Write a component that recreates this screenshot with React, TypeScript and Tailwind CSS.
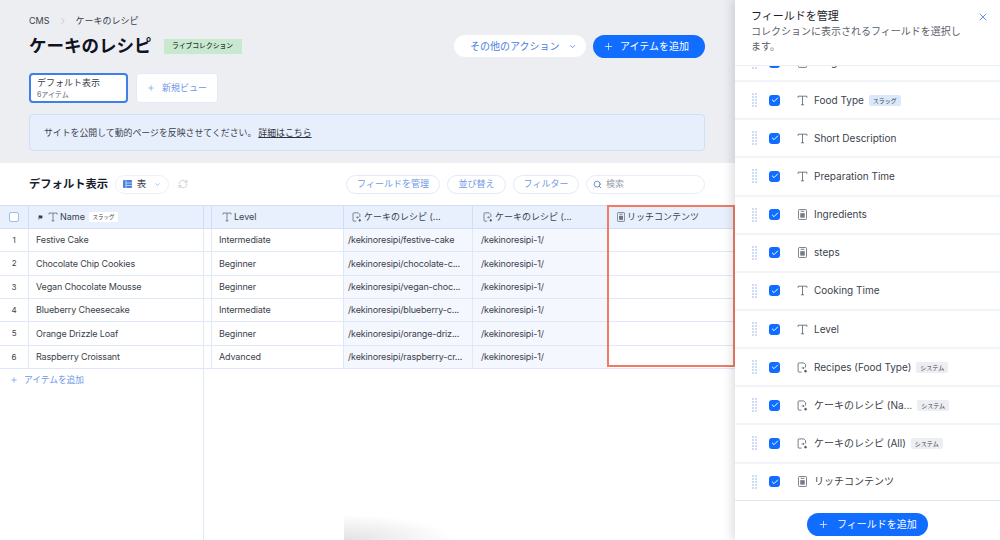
import { Check, ChevronDown, ChevronRight, Flag, Plus, RefreshCw, Search, X } from 'lucide-react';

const TextIcon = ({ className = '' }: { className?: string }) => (
  <svg viewBox="0 0 12 12" fill="none" stroke="currentColor" strokeWidth="0.8" className={className}>
    <path d="M1.2 3V1.3h9.6V3M6 1.3v9.4M4.3 10.7h3.4" />
  </svg>
);

const RichIcon = ({ className = '' }: { className?: string }) => (
  <svg viewBox="0 0 10 12" fill="none" className={className}>
    <rect x="0.5" y="0.5" width="9" height="11" rx="1" stroke="currentColor" strokeWidth="0.8" />
    <rect x="2.5" y="4.5" width="5" height="5" fill="currentColor" opacity="0.75" />
    <path d="M3 2.5h4" stroke="currentColor" strokeWidth="0.8" />
  </svg>
);

const RefIcon = ({ className = '' }: { className?: string }) => (
  <svg viewBox="0 0 12 12" fill="none" stroke="currentColor" strokeWidth="0.8" className={className}>
    <path d="M5 11H2.2a1 1 0 0 1-1-1V2a1 1 0 0 1 1-1h5.2l2 2v3" />
    <path d="M5 6.5h2.6M6.6 5.3l1.2 1.2-1.2 1.2" />
    <circle cx="9.3" cy="10" r="1" fill="currentColor" />
  </svg>
);

const TableIcon = () => (
  <svg viewBox="0 0 9 8" className="h-[8px] w-[9px]">
    <rect width="9" height="8" rx="1" fill="#4a80e0" />
    <path d="M3 0v8M3 3h6M3 5.5h6" stroke="#ffffff" strokeWidth="0.6" />
  </svg>
);

const columns = ['/kekinoresipi/festive-cake', '/kekinoresipi/chocolate-c...', '/kekinoresipi/vegan-choc...', '/kekinoresipi/blueberry-c...', '/kekinoresipi/orange-driz...', '/kekinoresipi/raspberry-cr...'];

const rows = [
  ['Festive Cake', 'Intermediate'],
  ['Chocolate Chip Cookies', 'Beginner'],
  ['Vegan Chocolate Mousse', 'Beginner'],
  ['Blueberry Cheesecake', 'Intermediate'],
  ['Orange Drizzle Loaf', 'Beginner'],
  ['Raspberry Croissant', 'Advanced'],
];

type Field = { name: string; icon: 'text' | 'rich' | 'ref'; tag?: string };

const fields: Field[] = [
  { name: 'Image', icon: 'rich' },
  { name: 'Food Type', icon: 'text', tag: 'スラッグ' },
  { name: 'Short Description', icon: 'text' },
  { name: 'Preparation Time', icon: 'text' },
  { name: 'Ingredients', icon: 'rich' },
  { name: 'steps', icon: 'rich' },
  { name: 'Cooking Time', icon: 'text' },
  { name: 'Level', icon: 'text' },
  { name: 'Recipes (Food Type)', icon: 'ref', tag: 'システム' },
  { name: 'ケーキのレシピ (Na...', icon: 'ref', tag: 'システム' },
  { name: 'ケーキのレシピ (All)', icon: 'ref', tag: 'システム' },
  { name: 'リッチコンテンツ', icon: 'rich' },
];

const FieldRow = ({ field }: { field: Field }) => (
  <div className="flex h-[38.15px] shrink-0 items-center border-b-2 border-[#f3f4f7] pl-[17px]">
    <div className="grid w-[5px] grid-cols-2 gap-[1px]">
      {[...Array(10)].map((_, i) => (
        <span key={i} className="h-[2px] w-[2px] bg-[#cfdcf5]" />
      ))}
    </div>
    <div className="ml-[12px] flex h-[11px] w-[11px] items-center justify-center rounded-[3px] bg-[#116dff] text-white">
      <Check size={8} strokeWidth={3} />
    </div>
    <div className="ml-[17px] flex w-[11px] items-center justify-center text-[#4a4e5c]">
      {field.icon === 'text' && <TextIcon className="h-[11px] w-[11px]" />}
      {field.icon === 'rich' && <RichIcon className="h-[11px] w-[9px]" />}
      {field.icon === 'ref' && <RefIcon className="h-[11px] w-[11px]" />}
    </div>
    <span className="ml-[6px] text-[10px] text-[#3b3f4c]">{field.name}</span>
    {field.tag && (
      <span className={`ml-[5px] flex h-[11px] items-center rounded-[2px] px-[4px] text-[6px] text-[#3b3f4c] ${field.tag === 'スラッグ' ? 'bg-[#dbe7fb]' : 'bg-[#eceef2]'}`}>
        {field.tag}
      </span>
    )}
  </div>
);

const HeaderCell = ({ label, width, icon, pad }: { label: string; width: string; icon: React.ReactNode; pad: string }) => (
  <div className={`flex h-full items-center border-r border-[#cfdff8] text-[9px] text-[#3b3f4c] ${width} ${pad}`}>
    {icon}
    <span className="ml-[2px] whitespace-nowrap">{label}</span>
  </div>
);

export default function App() {
  return (
    <div className="flex h-[540px] w-[1000px] overflow-hidden bg-white font-['Inter','Noto_Sans_CJK_JP',sans-serif]">
      <div className="relative flex w-[735px] shrink-0 flex-col">
        {/* top area */}
        <div className="h-[163px] shrink-0 bg-[#eceef2] pl-[29px] pr-[30px]">
          <div className="flex h-[42px] items-center text-[9px] text-[#3b3f4c]">
            <span>CMS</span>
            <ChevronRight size={10} strokeWidth={1} className="ml-[9px] text-[#8a8f9c]" />
            <span className="ml-[7px]">ケーキのレシピ</span>
          </div>
          <div className="flex h-[8px] items-center justify-between">
            <div className="flex items-center">
              <h1 className="text-[17.5px] font-bold text-[#0e1222]">ケーキのレシピ</h1>
              <span className="ml-[12px] flex h-[15px] w-[78px] items-center justify-center bg-[#c9e8d0] text-[6.8px] font-medium text-[#2c3a33]">ライブコレクション</span>
            </div>
            <div className="flex items-center gap-[7px]">
              <button className="flex h-[22px] w-[132px] items-center gap-[8px] rounded-full bg-white pl-[16px] text-[10px] text-[#4a80e0]">
                その他のアクション
                <ChevronDown size={9} />
              </button>
              <button className="flex h-[23px] w-[112px] items-center gap-[6px] rounded-full bg-[#116dff] pl-[10px] text-[10px] text-white">
                <Plus size={11} strokeWidth={1.5} />
                アイテムを追加
              </button>
            </div>
          </div>
          <div className="mt-[23px] flex gap-[8px]">
            <div className="flex h-[30px] w-[99px] flex-col justify-center rounded-[4px] border-2 border-[#3f7fe8] bg-white pl-[6px]">
              <span className="text-[9px] leading-[13px] text-[#3b3f4c]">デフォルト表示</span>
              <span className="text-[7px] leading-[11px] text-[#5a5f6c]">6アイテム</span>
            </div>
            <button className="flex h-[30px] w-[82px] items-center justify-center gap-[7px] rounded-[4px] border border-[#e3e9f6] bg-white text-[9px] text-[#6d98e6]">
              <Plus size={8} />
              新規ビュー
            </button>
          </div>
          <div className="mt-[11px] flex h-[37px] items-center rounded-[4px] border border-[#cfdff8] bg-[#e7effd] pl-[14px] text-[8.9px] text-[#3b3f4c]">
            サイトを公開して動的ページを反映させてください。
            <span className="ml-[2px] text-[#2f3340] underline">詳細はこちら</span>
          </div>
        </div>

        {/* toolbar */}
        <div className="flex h-[42px] shrink-0 items-center bg-white pl-[29px] pr-[30px]">
          <span className="text-[11.3px] font-bold text-[#1a1e2c]">デフォルト表示</span>
          <button className="ml-[7px] flex h-[19px] w-[54px] items-center justify-center gap-[5px] rounded-full border border-[#eef1f8] text-[9.5px] text-[#3b3f4c]">
            <TableIcon />
            表
            <ChevronDown size={7} className="ml-[3px] text-[#6d98e6]" />
          </button>
          <RefreshCw size={10} strokeWidth={1.5} className="ml-[9px] text-[#b4b8c2]" />
          <div className="ml-auto flex items-center gap-[7px] text-[9px] text-[#6d98e6]">
            <button className="flex h-[19px] w-[94px] items-center justify-center rounded-full border border-[#e3e9f6]">フィールドを管理</button>
            <button className="flex h-[19px] w-[59px] items-center justify-center rounded-full border border-[#e3e9f6]">並び替え</button>
            <button className="flex h-[19px] w-[66px] items-center justify-center rounded-full border border-[#e3e9f6]">フィルター</button>
            <div className="flex h-[19px] w-[119px] items-center gap-[4px] rounded-full border border-[#e9edf5] pl-[6px] text-[#9a9ea8]">
              <Search size={9} className="text-[#4a6fb0]" />
              検索
            </div>
          </div>
        </div>

        {/* table */}
        <div className="relative flex flex-1 flex-col bg-white">
          <div className="flex h-[24px] shrink-0 items-center border-y border-[#cfdff8] bg-[#e8f0fd]">
            <div className="flex h-full w-[29px] items-center justify-center border-r border-[#cfdff8]">
              <span className="h-[10px] w-[10px] rounded-[2px] border border-[#9dbcf0] bg-white" />
            </div>
            <div className="flex h-full w-[175px] items-center border-r border-[#cfdff8] pl-[9px] text-[9px] text-[#3b3f4c]">
              <Flag size={5} fill="currentColor" />
              <TextIcon className="ml-[5px] h-[10px] w-[10px] text-[#4a4e5c]" />
              <span className="ml-[2px]">Name</span>
              <span className="ml-[4px] flex h-[10px] w-[29px] items-center justify-center bg-white text-[5.5px]">スラッグ</span>
            </div>
            <div className="h-full w-[8px] border-r border-[#cfdff8]" />
            <HeaderCell label="Level" width="w-[132px]" pad="pl-[10px]" icon={<TextIcon className="h-[10px] w-[10px] text-[#4a4e5c]" />} />
            <HeaderCell label="ケーキのレシピ (..." width="w-[129px]" pad="pl-[8px]" icon={<RefIcon className="h-[10px] w-[10px] text-[#4a4e5c]" />} />
            <HeaderCell label="ケーキのレシピ (..." width="w-[135px]" pad="pl-[10px]" icon={<RefIcon className="h-[10px] w-[10px] text-[#4a4e5c]" />} />
            <HeaderCell label="リッチコンテンツ" width="w-[127px]" pad="pl-[9px]" icon={<RichIcon className="h-[10px] w-[8px] text-[#4a4e5c]" />} />
          </div>

          {rows.map(([name, level], i) => (
            <div key={name} className="flex h-[23.33px] shrink-0 items-center border-b border-[#dfe8f9] text-[9px] tracking-[-0.15px] text-[#3b3f4c]">
              <div className="flex h-full w-[29px] items-center justify-center border-r border-[#dfe8f9] text-[8px]">{i + 1}</div>
              <div className="flex h-full w-[175px] items-center border-r border-[#dfe8f9] pl-[7px]">{name}</div>
              <div className="h-full w-[8px] border-r border-[#dfe8f9]" />
              <div className="flex h-full w-[132px] items-center border-r border-[#dfe8f9] pl-[7px]">{level}</div>
              <div className="flex h-full w-[129px] items-center border-r border-[#dfe8f9] bg-[#f4f7fe] pl-[4px] whitespace-nowrap">{columns[i]}</div>
              <div className="flex h-full w-[135px] items-center bg-[#f4f7fe] pl-[8px]">/kekinoresipi-1/</div>
              <div className="h-full w-[127px]" />
            </div>
          ))}

          <div className="flex flex-1 flex-col">
            <div className="flex h-full w-[204px] border-r border-[#dfe8f9]">
              <div className="flex h-[23px] items-center gap-[6px] pl-[10px] text-[8.7px] text-[#6d98e6]">
                <Plus size={8} />
                アイテムを追加
              </div>
            </div>
          </div>

          {/* highlighted column */}
          <div className="absolute right-0 top-0 h-[162px] w-[128px] border-2 border-[#f27a63]" />
          {/* stray shadow at the bottom of the page */}
          <div className="absolute bottom-0 left-[344px] h-[26px] w-[110px] bg-[radial-gradient(ellipse_at_bottom_left,#e2e2e2_0%,#ffffff_70%)]" />
        </div>
      </div>

      {/* side panel */}
      <div className="relative z-10 flex w-[265px] shrink-0 flex-col bg-white shadow-[-4px_0_8px_rgba(40,50,70,0.14)]">
        <div className="relative z-10 h-[66px] shrink-0 border-b border-[#eceef2] bg-white pl-[16px] pr-[30px] pt-[9px]">
          <div className="text-[11px] leading-[15px] text-[#1a1e2c]">フィールドを管理</div>
          <div className="text-[10px] leading-[15px] text-[#5a5f6c]">コレクションに表示されるフィールドを選択します。</div>
          <X size={12} strokeWidth={1.5} className="absolute right-[11px] top-[11px] text-[#2f74e4]" />
        </div>
        <div className="flex-1 overflow-hidden">
          <div className="-mt-[22px]">
            {fields.map((f) => (
              <FieldRow key={f.name} field={f} />
            ))}
          </div>
        </div>
        <div className="flex h-[40px] shrink-0 items-start justify-center border-t border-[#e3e5ea] bg-white pt-[12px]">
          <button className="flex h-[23px] w-[121px] items-center gap-[8px] rounded-full bg-[#116dff] pl-[11px] text-[10px] text-white">
            <Plus size={11} strokeWidth={1.5} />
            フィールドを追加
          </button>
        </div>
      </div>
    </div>
  );
}
